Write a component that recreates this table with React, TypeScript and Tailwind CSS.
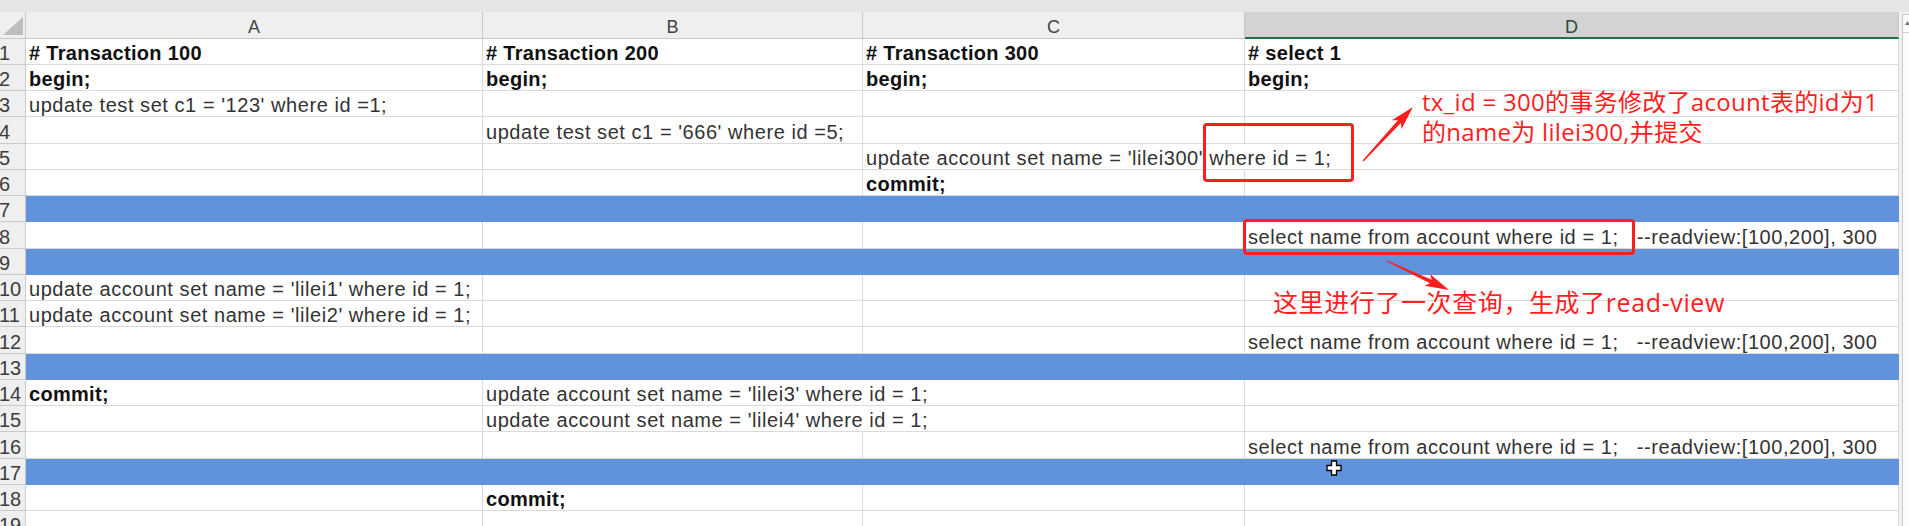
import React from "react"

type Cell = { text: string; bold?: boolean; span?: boolean } | null
type Row = { n: number; blue?: boolean; cells?: Cell[] }

const b = (text: string): Cell => ({ text, bold: true })
const t = (text: string): Cell => ({ text })
const wide = (text: string): Cell => ({ text, span: true })
const sel = "select name from account where id = 1;   --readview:[100,200], 300"

const rows: Row[] = [
  { n: 1, cells: [b("# Transaction 100"), b("# Transaction 200"), b("# Transaction 300"), b("# select 1")] },
  { n: 2, cells: [b("begin;"), b("begin;"), b("begin;"), b("begin;")] },
  { n: 3, cells: [t("update test set c1 = '123' where id =1;"), null, null, null] },
  { n: 4, cells: [null, t("update test set c1 = '666' where id =5;"), null, null] },
  { n: 5, cells: [null, null, wide("update account set name = 'lilei300' where id = 1;")] },
  { n: 6, cells: [null, null, b("commit;"), null] },
  { n: 7, blue: true },
  { n: 8, cells: [null, null, null, t(sel)] },
  { n: 9, blue: true },
  { n: 10, cells: [t("update account set name = 'lilei1' where id = 1;"), null, null, null] },
  { n: 11, cells: [t("update account set name = 'lilei2' where id = 1;"), null, null, null] },
  { n: 12, cells: [null, null, null, t(sel)] },
  { n: 13, blue: true },
  { n: 14, cells: [b("commit;"), wide("update account set name = 'lilei3' where id = 1;"), null] },
  { n: 15, cells: [null, wide("update account set name = 'lilei4' where id = 1;"), null] },
  { n: 16, cells: [null, null, null, t(sel)] },
  { n: 17, blue: true },
  { n: 18, cells: [null, b("commit;"), null, null] },
  { n: 19, cells: [null, null, null, null] },
]

const cols = "grid grid-cols-[26px_457px_380px_382px_654px]"

// tapered red arrow, like the ones a snipping tool draws
function arrow(x1: number, y1: number, x2: number, y2: number, head: number, wing: number, t0: number, t1: number) {
  const l = Math.hypot(x2 - x1, y2 - y1)
  const ux = (x2 - x1) / l
  const uy = (y2 - y1) / l
  const nx = -uy
  const ny = ux
  const bx = x2 - ux * head
  const by = y2 - uy * head
  const pts = [
    [x1 + nx * t0, y1 + ny * t0],
    [bx + nx * t1, by + ny * t1],
    [bx - ux * 4 + nx * wing, by - uy * 4 + ny * wing],
    [x2, y2],
    [bx - ux * 4 - nx * wing, by - uy * 4 - ny * wing],
    [bx - nx * t1, by - ny * t1],
    [x1 - nx * t0, y1 - ny * t0],
  ]
  return pts.map((p) => p.map((v) => v.toFixed(1)).join(",")).join(" ")
}

function RowHead({ n }: { n: number }) {
  return (
    <div className="bg-[#efefef] border-r border-b border-[#c9c9c9] overflow-hidden flex items-end">
      <span className="-ml-[1px] leading-[22px] text-[20px] text-[#3d3d3d]">{n}</span>
    </div>
  )
}

function SheetRow({ row }: { row: Row }) {
  const h = row.n % 4 === 0 ? "h-[27px]" : "h-[26px]"
  if (row.blue) {
    return (
      <div className={`${cols} ${h}`}>
        <RowHead n={row.n} />
        <div className="col-span-4 bg-[#6193dd]" />
      </div>
    )
  }
  const cells = row.cells ?? []
  return (
    <div className={`${cols} ${h}`}>
      <RowHead n={row.n} />
      {cells.map((c, i) => (
        <div
          key={i}
          className={`${c?.span ? "col-span-2" : ""} border-r border-b border-[#dadada] flex items-end pl-[3px] whitespace-pre`}
        >
          {c ? (
            <span
              className={`leading-[22px] text-[20px] ${
                c.bold ? "font-bold text-[#111] tracking-[0.3px]" : "text-[#333] tracking-[0.55px]"
              }`}
            >
              {c.text}
            </span>
          ) : null}
        </div>
      ))}
    </div>
  )
}

export default function App() {
  return (
    <div className="relative w-[1909px] h-[526px] overflow-hidden bg-white font-['Liberation_Sans',Arial,sans-serif]">
      <div className="h-[12px] bg-[#e6e6e6]" />
      <div className="flex">
        <div className="w-[1899px]">
          {/* column headers */}
          <div className={`${cols} h-[27px]`}>
            <div className="bg-[#efefef] border-r border-b border-[#c9c9c9]">
              <svg width="26" height="26" viewBox="0 0 26 26">
                <polygon points="23,5 23,23 3,23" fill="#bdbdbd" />
              </svg>
            </div>
            {["A", "B", "C"].map((l) => (
              <div
                key={l}
                className="bg-[#efefef] border-r border-b border-[#c9c9c9] flex items-end justify-center pb-[1px]"
              >
                <span className="leading-[20px] text-[18px] text-[#444]">{l}</span>
              </div>
            ))}
            <div className="bg-[#d3d3d3] border-r border-[#c9c9c9] border-b-2 border-b-[#217346] flex items-end justify-center">
              <span className="leading-[20px] text-[18px] text-[#2c4a38]">D</span>
            </div>
          </div>
          {rows.map((r) => (
            <SheetRow key={r.n} row={r} />
          ))}
        </div>
        {/* vertical scrollbar edge */}
        <div className="w-[10px] h-[514px] bg-[#f1f1f1] pl-[3px] pt-[2px]">
          <div className="h-full border-l border-t border-[#c8c8c8] bg-[#fbfbfb]">
            <div className="h-[18px] border-b border-[#d0d0d0] pl-[2px] pt-[6px]">
              <svg width="5" height="4" viewBox="0 0 5 4">
                <polygon points="0,4 5,4 2.5,0" fill="#777" />
              </svg>
            </div>
          </div>
        </div>
      </div>

      {/* annotations */}
      <div className="absolute left-[1203px] top-[123px] w-[151px] h-[59px] border-[3px] border-[#ff1e1e] rounded-[4px]" />
      <div className="absolute left-[1243px] top-[219px] w-[392px] h-[36px] border-[3px] border-[#ff1e1e] rounded-[4px]" />
      <div className="absolute left-[1422px] top-[87px] text-[24px] leading-[30px] tracking-[0.3px] text-[#ff1e1e] whitespace-nowrap font-['Open_Sans','Noto_Sans_CJK_SC',sans-serif]">
        tx_id = 300的事务修改了acount表的id为1
        <br />
        的name为 lilei300,并提交
      </div>
      <div className="absolute left-[1273px] top-[287px] text-[25px] leading-[30px] tracking-[0.6px] text-[#ff1e1e] whitespace-nowrap font-['Open_Sans','Noto_Sans_CJK_SC',sans-serif]">
        这里进行了一次查询，生成了read-view
      </div>
      <svg className="absolute left-0 top-0 pointer-events-none" width="1909" height="526">
        <polygon points={arrow(1363, 161, 1413, 107, 20, 6.5, 0.7, 2)} fill="#ff1e1e" />
        <polygon points={arrow(1387, 261, 1449, 290, 20, 6.5, 0.7, 2)} fill="#ff1e1e" />
        <path
          d="M1331.5,461 h5 v4.5 h4.5 v5 h-4.5 v4.5 h-5 v-4.5 h-4.5 v-5 h4.5 z"
          fill="#fff"
          stroke="#000"
          strokeWidth="1.3"
        />
      </svg>
    </div>
  )
}
